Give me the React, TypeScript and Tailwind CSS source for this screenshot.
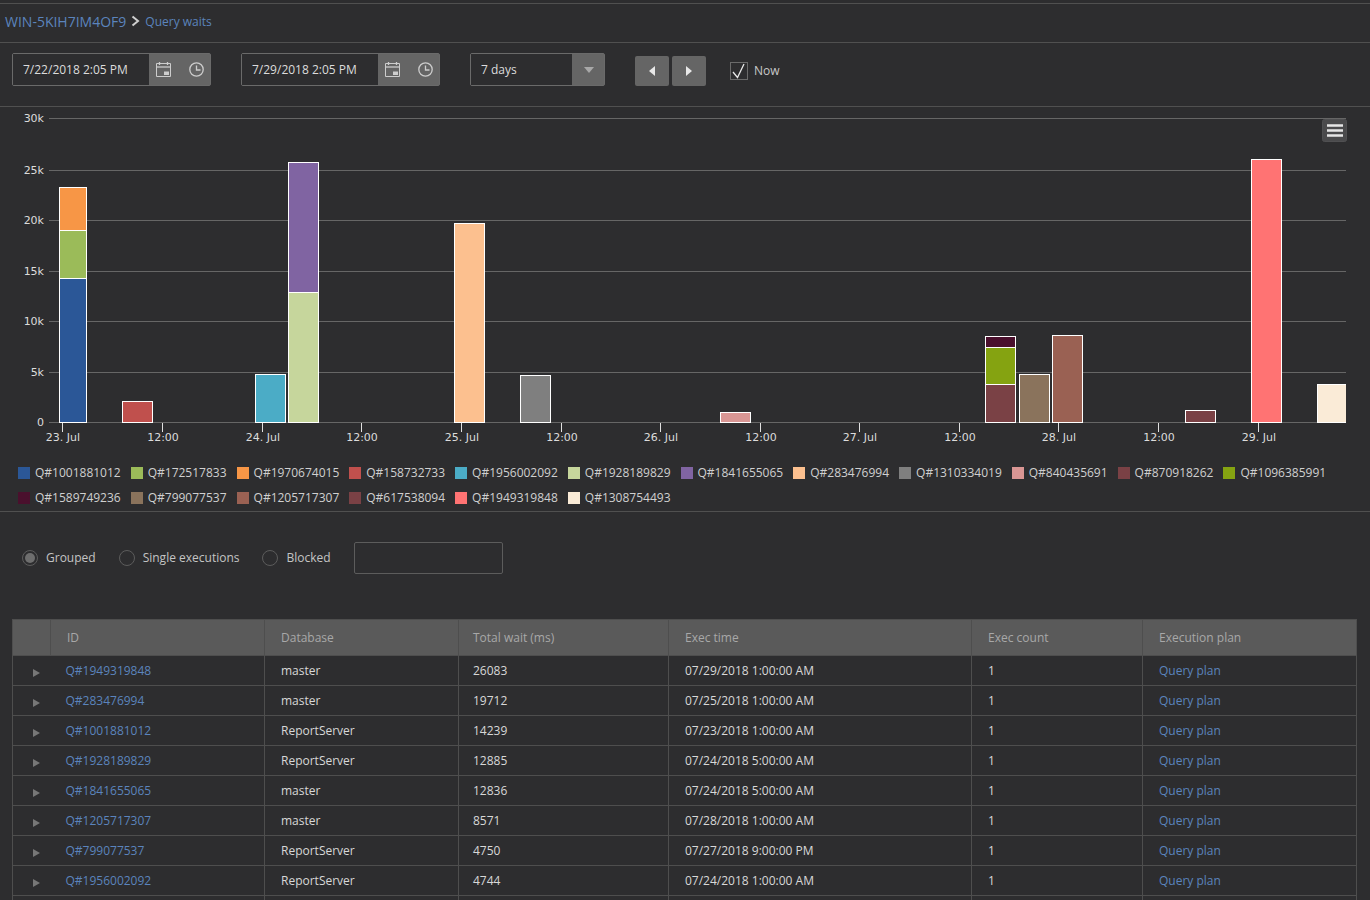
const legend = [
  ["Q#1001881012", "#2b5797"],
  ["Q#172517833", "#9bbb59"],
  ["Q#1970674015", "#f79646"],
  ["Q#158732733", "#c0504d"],
  ["Q#1956002092", "#4bacc6"],
  ["Q#1928189829", "#c6d69c"],
  ["Q#1841655065", "#8064a2"],
  ["Q#283476994", "#fcc08f"],
  ["Q#1310334019", "#7f7f7f"],
  ["Q#840435691", "#d99694"],
  ["Q#870918262", "#7a4145"],
  ["Q#1096385991", "#85a311"],
  ["Q#1589749236", "#4a102d"],
  ["Q#799077537", "#8a735c"],
  ["Q#1205717307", "#9a6153"],
  ["Q#617538094", "#7a4145"],
  ["Q#1949319848", "#ff7373"],
  ["Q#1308754493", "#faebd7"],
];

// x, width, top, colour; all bars sit on the zero line at y=422.
// Stacks list the top segment first so lower segments paint over it.
const bars: [number, number, number, string][] = [
  [59, 28, 187, "#f79646"],
  [59, 28, 230, "#9bbb59"],
  [59, 28, 278, "#2b5797"],
  [122, 31, 401, "#c0504d"],
  [255, 31, 374, "#4bacc6"],
  [288, 31, 162, "#8064a2"],
  [288, 31, 292, "#c6d69c"],
  [454, 31, 223, "#fcc08f"],
  [520, 31, 375, "#7f7f7f"],
  [720, 31, 412, "#d99694"],
  [985, 31, 336, "#4a102d"],
  [985, 31, 347, "#85a311"],
  [985, 31, 384, "#7a4145"],
  [1019, 31, 374, "#8a735c"],
  [1052, 31, 335, "#9a6153"],
  [1185, 31, 410, "#7a4145"],
  [1251, 31, 159, "#ff7373"],
  [1317, 31, 384, "#faebd7"],
];

const grid: [number, string][] = [
  [118, "30k"],
  [170, "25k"],
  [220, "20k"],
  [271, "15k"],
  [321, "10k"],
  [372, "5k"],
  [422, "0"],
];

const ticks: [number, string][] = [
  [62, "23. Jul"],
  [162, "12:00"],
  [262, "24. Jul"],
  [361, "12:00"],
  [461, "25. Jul"],
  [561, "12:00"],
  [660, "26. Jul"],
  [760, "12:00"],
  [859, "27. Jul"],
  [959, "12:00"],
  [1058, "28. Jul"],
  [1158, "12:00"],
  [1258, "29. Jul"],
];

const rows = [
  ["Q#1949319848", "master", "26083", "07/29/2018 1:00:00 AM", "1", "Query plan"],
  ["Q#283476994", "master", "19712", "07/25/2018 1:00:00 AM", "1", "Query plan"],
  ["Q#1001881012", "ReportServer", "14239", "07/23/2018 1:00:00 AM", "1", "Query plan"],
  ["Q#1928189829", "ReportServer", "12885", "07/24/2018 5:00:00 AM", "1", "Query plan"],
  ["Q#1841655065", "master", "12836", "07/24/2018 5:00:00 AM", "1", "Query plan"],
  ["Q#1205717307", "master", "8571", "07/28/2018 1:00:00 AM", "1", "Query plan"],
  ["Q#799077537", "ReportServer", "4750", "07/27/2018 9:00:00 PM", "1", "Query plan"],
  ["Q#1956002092", "ReportServer", "4744", "07/24/2018 1:00:00 AM", "1", "Query plan"],
];

const CalendarIcon = () => (
  <svg width="15" height="15" viewBox="0 0 15 15" fill="none" stroke="#cdcdcd">
    <path d="M.5 1.500h14v13H.5z" />
    <path d="M0 5h15" strokeWidth="1.300" />
    <path d="M3.500 0v3M11.500 0v3" strokeWidth="1.300" />
    <path d="M8 9.500h5v3.500H8z" fill="#cdcdcd" stroke="none" />
  </svg>
);

const ClockIcon = () => (
  <svg width="15" height="15" viewBox="0 0 15 15" fill="none" stroke="#cdcdcd" strokeWidth="1.300">
    <circle cx="7.500" cy="7.500" r="6.700" />
    <path d="M7.500 3.500v4.500h4" />
  </svg>
);

const DateField = ({ value }: { value: string }) => (
  <div className="flex h-[33px] w-[199px] rounded-[2px] border border-[#6a6a6a] bg-[#656565]">
    <div className="flex w-[136px] items-center bg-[#2d2d2f] pl-[10px] text-[12px] text-[#dcdcdc]">{value}</div>
    <div className="flex flex-1 items-center justify-between pl-[7px] pr-[6px]">
      <CalendarIcon />
      <ClockIcon />
    </div>
  </div>
);

const Radio = ({ label, checked }: { label: string; checked?: boolean }) => (
  <label className="flex items-center gap-[8px] text-[12px] text-[#c4c4c4]">
    <span className="flex h-[16px] w-[16px] items-center justify-center rounded-full border border-[#5c5c5c]">
      {checked && <span className="h-[10px] w-[10px] rounded-full bg-[#6e6e6e]" />}
    </span>
    {label}
  </label>
);

export default function App() {
  return (
    <div className="h-[900px] w-[1370px] overflow-hidden bg-[#2d2d2f] pt-[3px] font-['Open_Sans',sans-serif]">
      <header className="flex h-[40px] items-center border-y border-[#505050] pb-[4px] pl-[5px] text-[#5b84bd]">
        <span className="text-[14px]">WIN-5KIH7IM4OF9</span>
        <svg width="10" height="12" viewBox="0 0 10 12" className="ml-[5px]" fill="none" stroke="#d0d0d0" strokeWidth="2">
          <path d="M1.500 1.500L7 6l-5.500 4.500" />
        </svg>
        <span className="ml-[4px] pt-[1px] text-[12px]">Query waits</span>
      </header>

      <div className="flex h-[64px] items-start border-b border-[#505050] pl-[12px] pt-[10px]">
        <DateField value="7/22/2018 2:05 PM" />
        <div className="ml-[30px]">
          <DateField value="7/29/2018 2:05 PM" />
        </div>
        <div className="ml-[30px] flex h-[33px] w-[135px] rounded-[2px] border border-[#6a6a6a] bg-[#656565]">
          <div className="flex w-[101px] items-center bg-[#2d2d2f] pl-[10px] text-[12px] text-[#dcdcdc]">7 days</div>
          <div className="flex flex-1 items-center justify-center pl-[2px]">
            <div className="h-0 w-0 border-x-[5px] border-t-[6px] border-x-transparent border-t-[#a8a8a8]" />
          </div>
        </div>
        <button className="ml-[30px] mt-[3px] flex h-[30px] w-[34px] items-center justify-center rounded-[2px] bg-[#656565]">
          <div className="h-0 w-0 border-y-[5px] border-r-[6px] border-y-transparent border-r-[#e8e8e8]" />
        </button>
        <button className="ml-[3px] mt-[3px] flex h-[30px] w-[34px] items-center justify-center rounded-[2px] bg-[#656565]">
          <div className="h-0 w-0 border-y-[5px] border-l-[6px] border-y-transparent border-l-[#e8e8e8]" />
        </button>
        <div className="ml-[24px] mt-[9px] flex items-center gap-[6px] text-[12px] text-[#c8c8c8]">
          <span className="flex h-[18px] w-[18px] items-center justify-center border border-[#6a6a6a]">
            <svg width="16" height="16" viewBox="0 0 16 16" fill="none" stroke="#e8e8e8" strokeWidth="1.300">
              <path d="M2 9l4.500 5.500L13 1" />
            </svg>
          </span>
          Now
        </div>
      </div>

      <svg width="1370" height="353" viewBox="0 107 1370 353" className="block font-['DejaVu_Sans',sans-serif]">
        {grid.map(([y, label]) => (
          <g key={label}>
            <line x1="49" x2="1346" y1={y + 0.5} y2={y + 0.5} stroke="#666666" />
            <text x="44" y={y + 4} textAnchor="end" fontSize="11" fill="#dcdcdc">
              {label}
            </text>
          </g>
        ))}
        {ticks.map(([x, label], i) => (
          <g key={i}>
            <line x1={x + 0.5} x2={x + 0.5} y1="423" y2="432" stroke="#e0e0e0" />
            <text x={x + 1} y="441" textAnchor="middle" fontSize="11" fill="#dcdcdc">
              {label}
            </text>
          </g>
        ))}
        {bars.map(([x, w, top, fill], i) => (
          <rect key={i} x={x + 0.5} y={top + 0.5} width={w - 1} height={422 - top} fill={fill} stroke="#ffffff" />
        ))}
        <rect x="1346" y="380" width="4" height="44" fill="#2d2d2f" />
        <rect x="1322.500" y="119.500" width="24" height="22" rx="2" fill="#4a4a4c" stroke="#505052" />
        <path d="M1327 125.500h16M1327 130.500h16M1327 135.500h16" stroke="#e6e6e6" strokeWidth="2.500" />
      </svg>

      <div className="h-[52px] border-b border-[#505050] pl-[18px]">
        <div className="flex flex-wrap gap-x-[10px]">
          {legend.map(([name, color]) => (
            <div key={name} className="flex h-[25px] items-center gap-[5px] text-[12px] text-[#d0d0d0]">
              <span className="h-[12px] w-[12px]" style={{ backgroundColor: color }} />
              {name}
            </div>
          ))}
        </div>
      </div>

      <div className="mt-[30px] flex h-[32px] items-center gap-[23px] pl-[22px]">
        <Radio label="Grouped" checked />
        <Radio label="Single executions" />
        <Radio label="Blocked" />
        <div className="h-[32px] w-[149px] rounded-[2px] border border-[#5c5c5c]" />
      </div>

      <div className="mt-[45px] pl-[12px]">
        <table className="w-[1344px] table-fixed border-collapse text-left text-[12px]">
          <colgroup>
            <col className="w-[38px]" />
            <col className="w-[214px]" />
            <col className="w-[194px]" />
            <col className="w-[210px]" />
            <col className="w-[303px]" />
            <col className="w-[171px]" />
            <col className="w-[214px]" />
          </colgroup>
          <thead>
            <tr className="h-[36px] bg-[#5a5a5a] text-[#a8a8a8]">
              <th className="border border-[#4e4e4e]" />
              <th className="border border-[#4e4e4e] pl-[16px] font-normal">ID</th>
              <th className="border border-[#4e4e4e] pl-[16px] font-normal">Database</th>
              <th className="border border-[#4e4e4e] pl-[14px] font-normal">Total wait (ms)</th>
              <th className="border border-[#4e4e4e] pl-[16px] font-normal">Exec time</th>
              <th className="border border-[#4e4e4e] pl-[16px] font-normal">Exec count</th>
              <th className="border border-[#4e4e4e] pl-[16px] font-normal">Execution plan</th>
            </tr>
          </thead>
          <tbody className="text-[#d8d8d8]">
            {rows.map((r) => (
              <tr key={r[0]} className="h-[30px]">
                <td className="border-y border-l border-[#4e4e4e]">
                  <div className="ml-[20px] mt-[4px] h-0 w-0 border-y-[4px] border-l-[7px] border-y-transparent border-l-[#777777]" />
                </td>
                <td className="border-y border-r border-[#4e4e4e] pl-[15px] text-[#5b84bd]">{r[0]}</td>
                <td className="border border-[#4e4e4e] pl-[16px]">{r[1]}</td>
                <td className="border border-[#4e4e4e] pl-[14px]">{r[2]}</td>
                <td className="border border-[#4e4e4e] pl-[16px]">{r[3]}</td>
                <td className="border border-[#4e4e4e] pl-[16px]">{r[4]}</td>
                <td className="border border-[#4e4e4e] pl-[16px] text-[#5b84bd]">{r[5]}</td>
              </tr>
            ))}
            <tr className="h-[30px]">
              <td className="border-y border-l border-[#4e4e4e]" />
              <td className="border-y border-r border-[#4e4e4e]" />
              <td className="border border-[#4e4e4e]" />
              <td className="border border-[#4e4e4e]" />
              <td className="border border-[#4e4e4e]" />
              <td className="border border-[#4e4e4e]" />
              <td className="border border-[#4e4e4e]" />
            </tr>
          </tbody>
        </table>
      </div>
    </div>
  );
}
